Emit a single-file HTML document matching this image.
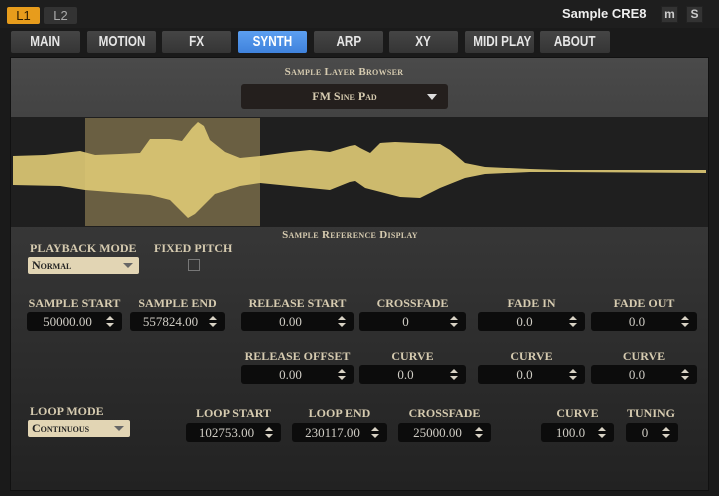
<!DOCTYPE html>
<html><head><meta charset="utf-8"><style>
*{margin:0;padding:0;box-sizing:border-box}
body{width:719px;height:496px;background:#1a1a1a;position:relative;overflow:hidden;font-family:"Liberation Sans",sans-serif}
.a{position:absolute}
.tab{position:absolute;top:31px;height:22px;background:linear-gradient(#454545,#353535);border-radius:2px;color:#e6e6e6;font:bold 15px "Liberation Sans",sans-serif;text-align:center;line-height:22px;white-space:nowrap;overflow:visible}
.tab span{display:inline-block;transform:scaleX(.78);transform-origin:center}
.lbl{position:absolute;color:#d6cbb0;font:bold 12px "Liberation Serif",serif;white-space:nowrap;text-align:center}
.sc{font-variant:small-caps;font-size:12px;letter-spacing:.3px}
.f{position:absolute;height:19px;background:#0c0c0c;border-radius:3px;color:#d0cdc5;font:13px "Liberation Serif",serif;line-height:19px;text-align:center;padding-right:14px}
.f:after{content:"";position:absolute;right:8px;top:4px;width:0;height:0;border-left:4px solid transparent;border-right:4px solid transparent;border-bottom:4px solid #d8d2c4}
.f:before{content:"";position:absolute;right:8px;top:11px;width:0;height:0;border-left:4px solid transparent;border-right:4px solid transparent;border-top:4px solid #d8d2c4}
.dd{position:absolute;height:17px;background:#e2d5b4;border-radius:2px;color:#222;font:bold 12px "Liberation Serif",serif;font-variant:small-caps;line-height:17px;padding-left:4px}
.dd:after{content:"";position:absolute;right:6px;top:6px;border-left:5px solid transparent;border-right:5px solid transparent;border-top:5px solid #666}
</style></head><body>
<div class="a" style="left:0;top:0;width:719px;height:28px;background:#1e1e1e"></div>
<div class="a" style="left:7px;top:7px;width:33px;height:17px;background:#e79c1c;border-radius:2px;color:#2a1a00;font:13px 'Liberation Sans';text-align:center;line-height:17px">L1</div>
<div class="a" style="left:44px;top:7px;width:33px;height:17px;background:#333;border-radius:2px;color:#aaa;font:13px 'Liberation Sans';text-align:center;line-height:17px">L2</div>
<div class="a" style="left:562px;top:6px;color:#eee;font:bold 13px 'Liberation Sans'">Sample CRE8</div>
<div class="a" style="left:661px;top:6px;width:17px;height:17px;background:#333;border:1px solid #222;color:#ccc;font:bold 12px 'Liberation Sans';text-align:center;line-height:15px">m</div>
<div class="a" style="left:686px;top:6px;width:17px;height:17px;background:#333;border:1px solid #222;color:#ccc;font:bold 12px 'Liberation Sans';text-align:center;line-height:15px">S</div>

<div class="tab" style="left:11px;width:69px"><span>MAIN</span></div>
<div class="tab" style="left:87px;width:69px"><span>MOTION</span></div>
<div class="tab" style="left:162px;width:69px"><span>FX</span></div>
<div class="tab" style="left:238px;width:69px;background:linear-gradient(#5c9ff0,#3f82dc);color:#fff"><span>SYNTH</span></div>
<div class="tab" style="left:314px;width:69px"><span>ARP</span></div>
<div class="tab" style="left:389px;width:69px"><span>XY</span></div>
<div class="tab" style="left:465px;width:69px"><span>MIDI PLAY</span></div>
<div class="tab" style="left:540px;width:70px"><span>ABOUT</span></div>

<div class="a" style="left:10px;top:57px;width:699px;height:434px;background:linear-gradient(#4a4a4a 0%,#3a3a3a 30%,#2c2c2c 70%,#222 100%);border:1px solid #111"></div>
<div class="lbl sc" style="left:240px;top:66px;width:208px;font-size:11px">Sample Layer Browser</div>
<div class="a" style="left:241px;top:84px;width:207px;height:25px;background:#241f1d;border-radius:3px;color:#d6cbb0;font:bold 12px 'Liberation Serif';font-variant:small-caps;text-align:center;line-height:25px">FM Sine Pad</div>
<div class="a" style="left:427px;top:94px;border-left:5px solid transparent;border-right:5px solid transparent;border-top:6px solid #ddd"></div>

<svg class="a" style="left:0;top:0" width="719" height="240">
<rect x="11" y="117" width="697" height="110" fill="#1f1f1f"/>
<rect x="85" y="118" width="175" height="108" fill="#6a5f42"/>
<polygon fill="#dcc874" fill-opacity=".92" points="13,156 45,155 80,151 95,155 120,154 140,153 150,139 170,139 182,141 192,128 198,122 204,126 210,140 225,152 240,158 260,156 290,152 310,150 330,152 350,146 355,145 360,148 370,153 380,143 395,142 440,144 450,150 465,163 485,167 530,169 560,170 706,170 706,173 560,172 530,172 485,174 465,178 440,188 420,198 400,197 365,188 355,181 350,182 330,190 310,188 260,183 240,186 215,194 205,204 195,214 188,218 180,210 170,200 150,195 110,192 85,190 60,186 13,185"/>
</svg>
<div class="lbl sc" style="left:240px;top:229px;width:220px;font-size:11px">Sample Reference Display</div>

<div class="lbl" style="left:30px;top:241px">PLAYBACK MODE</div>
<div class="lbl" style="left:154px;top:241px">FIXED PITCH</div>
<div class="dd" style="left:28px;top:257px;width:111px">Normal</div>
<div class="a" style="left:188px;top:259px;width:12px;height:12px;border:1px solid #777"></div>

<div class="lbl" style="left:27px;top:296px;width:95px">SAMPLE START</div>
<div class="lbl" style="left:130px;top:296px;width:95px">SAMPLE END</div>
<div class="lbl" style="left:241px;top:296px;width:113px">RELEASE START</div>
<div class="lbl" style="left:359px;top:296px;width:107px">CROSSFADE</div>
<div class="lbl" style="left:478px;top:296px;width:107px">FADE IN</div>
<div class="lbl" style="left:591px;top:296px;width:106px">FADE OUT</div>
<div class="f" style="left:27px;top:312px;width:95px">50000.00</div>
<div class="f" style="left:130px;top:312px;width:95px">557824.00</div>
<div class="f" style="left:241px;top:312px;width:113px">0.00</div>
<div class="f" style="left:359px;top:312px;width:107px">0</div>
<div class="f" style="left:478px;top:312px;width:107px">0.0</div>
<div class="f" style="left:591px;top:312px;width:106px">0.0</div>

<div class="lbl" style="left:241px;top:349px;width:113px">RELEASE OFFSET</div>
<div class="lbl" style="left:359px;top:349px;width:107px">CURVE</div>
<div class="lbl" style="left:478px;top:349px;width:107px">CURVE</div>
<div class="lbl" style="left:591px;top:349px;width:106px">CURVE</div>
<div class="f" style="left:241px;top:365px;width:113px">0.00</div>
<div class="f" style="left:359px;top:365px;width:107px">0.0</div>
<div class="f" style="left:478px;top:365px;width:107px">0.0</div>
<div class="f" style="left:591px;top:365px;width:106px">0.0</div>

<div class="lbl" style="left:30px;top:404px">LOOP MODE</div>
<div class="dd" style="left:28px;top:420px;width:102px">Continuous</div>
<div class="lbl" style="left:186px;top:406px;width:95px">LOOP START</div>
<div class="lbl" style="left:292px;top:406px;width:95px">LOOP END</div>
<div class="lbl" style="left:398px;top:406px;width:93px">CROSSFADE</div>
<div class="lbl" style="left:541px;top:406px;width:73px">CURVE</div>
<div class="lbl" style="left:622px;top:406px;width:58px">TUNING</div>
<div class="f" style="left:186px;top:423px;width:95px">102753.00</div>
<div class="f" style="left:292px;top:423px;width:95px">230117.00</div>
<div class="f" style="left:398px;top:423px;width:93px">25000.00</div>
<div class="f" style="left:541px;top:423px;width:73px">100.0</div>
<div class="f" style="left:626px;top:423px;width:52px">0</div>
</body></html>
